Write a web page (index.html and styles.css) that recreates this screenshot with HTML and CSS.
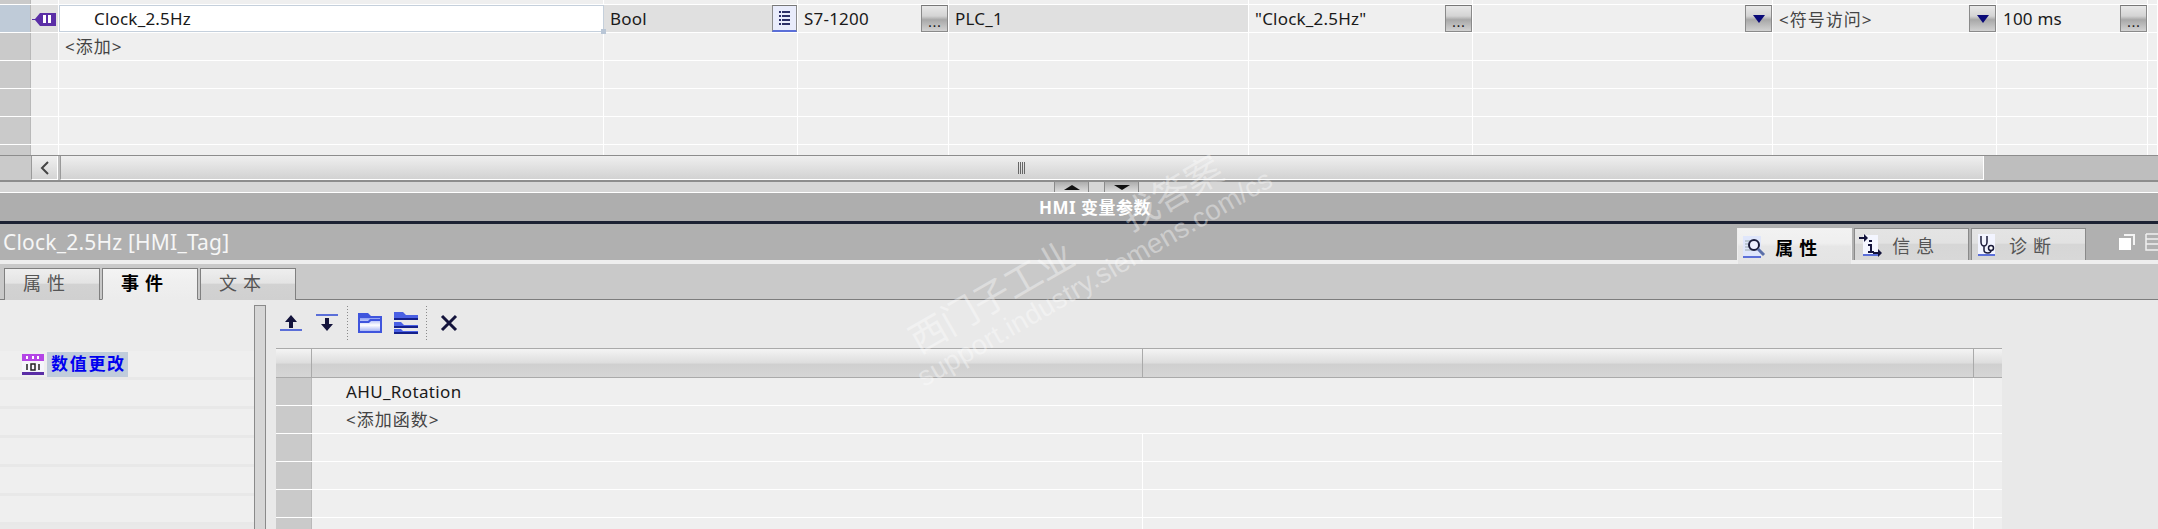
FILE: index.html
```html
<!DOCTYPE html>
<html lang="zh-CN">
<head>
  <meta charset="UTF-8">
  <title>HMI Tag</title>
  <link rel="stylesheet" href="styles.css">
</head>
<body>
  <div class="page">
    <div class="tag-table">
      <div class="tag-row strip">
        <div class="hdr"></div><div class="cell"></div><div class="cell"></div><div class="cell"></div><div class="cell"></div><div class="cell"></div><div class="cell"></div><div class="cell"></div><div class="cell"></div><div class="cell"></div><div class="cell"></div>
      </div>
      <div class="tag-row selected">
        <div class="hdr"></div>
        <div class="cell icon-cell">
          <svg width="24" height="16" viewBox="0 0 24 16"><path d="M0 8h3l5-6h16v13H8L3 9H0z" fill="#5a2ea6"/><rect x="11" y="4" width="3" height="8" fill="#fff"/><rect x="16" y="4" width="3" height="8" fill="#fff"/></svg>
        </div>
        <div class="cell name-cell">Clock_2.5Hz<span class="handle"></span></div>
        <div class="cell dark">Bool
          <button class="btn list-btn"><svg width="15" height="21" viewBox="0 0 15 21"><g fill="#2c2f66"><rect x="2" y="3" width="2" height="2"/><rect x="5" y="3" width="8" height="2"/><rect x="2" y="7" width="2" height="2"/><rect x="5" y="7" width="8" height="2"/><rect x="2" y="11" width="2" height="2"/><rect x="5" y="11" width="8" height="2"/><rect x="2" y="15" width="2" height="2"/><rect x="5" y="15" width="8" height="2"/></g></svg></button>
        </div>
        <div class="cell">S7-1200<button class="btn">...</button></div>
        <div class="cell dark">PLC_1</div>
        <div class="cell">"Clock_2.5Hz"<button class="btn">...</button></div>
        <div class="cell"><button class="btn drop"><span class="tri"></span></button></div>
        <div class="cell cjk">&lt;符号访问&gt;<button class="btn drop"><span class="tri"></span></button></div>
        <div class="cell">100 ms<button class="btn">...</button></div>
        <div class="cell"></div>
      </div>
      <div class="tag-row">
        <div class="hdr"></div><div class="cell shade"></div><div class="cell cjk raised">&lt;添加&gt;</div><div class="cell"></div><div class="cell"></div><div class="cell"></div><div class="cell"></div><div class="cell"></div><div class="cell"></div><div class="cell"></div><div class="cell"></div>
      </div>
      <div class="tag-row">
        <div class="hdr"></div><div class="cell"></div><div class="cell"></div><div class="cell"></div><div class="cell"></div><div class="cell"></div><div class="cell"></div><div class="cell"></div><div class="cell"></div><div class="cell"></div><div class="cell"></div>
      </div>
      <div class="tag-row">
        <div class="hdr"></div><div class="cell"></div><div class="cell"></div><div class="cell"></div><div class="cell"></div><div class="cell"></div><div class="cell"></div><div class="cell"></div><div class="cell"></div><div class="cell"></div><div class="cell"></div>
      </div>
      <div class="tag-row">
        <div class="hdr"></div><div class="cell"></div><div class="cell"></div><div class="cell"></div><div class="cell"></div><div class="cell"></div><div class="cell"></div><div class="cell"></div><div class="cell"></div><div class="cell"></div><div class="cell"></div>
      </div>
      <div class="tag-row tail">
        <div class="hdr"></div><div class="cell"></div><div class="cell"></div><div class="cell"></div><div class="cell"></div><div class="cell"></div><div class="cell"></div><div class="cell"></div><div class="cell"></div><div class="cell"></div><div class="cell"></div>
      </div>
    </div>

    <div class="hscroll">
      <div class="hscroll-corner"></div>
      <div class="hscroll-btn"><svg width="10" height="14" viewBox="0 0 10 14"><path d="M8 1L2 7l6 6" fill="none" stroke="#444" stroke-width="2"/></svg></div>
      <div class="hscroll-thumb"><span class="grip"></span></div>
      <div class="hscroll-rest"></div>
    </div>

    <div class="splitter">
      <div class="split-btn"><span class="tri-up"></span></div>
      <div class="split-btn"><span class="tri-down"></span></div>
    </div>

    <div class="editor-title">HMI 变量参数</div>

    <div class="title-bar">
      <div class="title-text">Clock_2.5Hz [HMI_Tag]</div>
      <div class="insp-tab active">
        <span class="insp-icon"><svg width="24" height="26" viewBox="0 0 24 26"><rect x="1" y="2" width="18" height="21" fill="#dfe6fb"/><rect x="1" y="22" width="18" height="2" fill="#5b6fd8"/><g stroke="#9aa" stroke-width="1"><path d="M3 7h8M3 10h6M3 13h6M3 16h8"/></g><circle cx="12" cy="11" r="5" fill="#eef" stroke="#1b1b3a" stroke-width="2"/><path d="M16 15l6 6" stroke="#5b6fa8" stroke-width="3"/></svg></span>
        <span class="insp-label">属性</span>
      </div>
      <div class="insp-tab">
        <span class="insp-icon"><svg width="24" height="26" viewBox="0 0 24 26"><rect x="4" y="3" width="15" height="20" fill="#f4f6ff"/><rect x="4" y="22" width="15" height="2" fill="#5b6fd8"/><path d="M0 5h5V2l4 4-4 4V7H0z" fill="#14143c"/><path d="M10 8h3v2h-3zM9 12h4v7h2v2H9v-2h2v-5H9z" fill="#14143c"/><path d="M14 20h5v-3l4 4-4 4v-3h-5z" fill="#14143c"/></svg></span>
        <span class="insp-label">信息</span>
      </div>
      <div class="insp-tab">
        <span class="insp-icon steth"><svg width="18" height="26" viewBox="0 0 18 26"><rect x="0" y="2" width="17" height="21" fill="#f2f4ff"/><rect x="0" y="22" width="17" height="2" fill="#5b6fd8"/><path d="M3 4v6c0 3 2 4 3 4s3-1 3-4V4M6 14v4c0 2 2 3 4 3s3-1 3-3" fill="none" stroke="#1a1a3a" stroke-width="1.5"/><circle cx="13" cy="16" r="2.5" fill="#fff" stroke="#1a1a3a" stroke-width="1.5"/></svg></span>
        <span class="insp-label">诊断</span>
      </div>
      <div class="win-icons">
        <svg width="18" height="18" viewBox="0 0 18 18"><path d="M6 1h11v11h-2V3H6z" fill="#f4f4f4"/><rect x="1" y="5" width="12" height="12" fill="#fff"/></svg>
        <svg class="lines-icon" width="13" height="18" viewBox="0 0 13 18"><path d="M1 1h12M1 1v16h12M1 6h12M1 11h12" fill="none" stroke="#f0f0f0" stroke-width="1.5"/></svg>
      </div>
    </div>

    <div class="tab-strip">
      <div class="sub-tab">属性</div>
      <div class="sub-tab active">事件</div>
      <div class="sub-tab">文本</div>
    </div>

    <div class="main">
      <div class="event-list">
        <div class="event-top"></div>
        <div class="event-row">
          <svg class="event-icon" width="22" height="21" viewBox="0 0 22 21"><rect width="22" height="8" fill="#b445e6"/><rect y="7" width="22" height="12" fill="#f5f5fb"/><rect y="18" width="22" height="3" fill="#5a2ea6"/><path d="M5 2v3M11 2v3M16 2v3" stroke="#fff" stroke-width="2"/><path d="M5 10v6M9 10h4v6H9zM17 10v6" fill="none" stroke="#222" stroke-width="1.5"/></svg>
          <span class="event-label">数值更改</span>
        </div>
        <div class="event-row"></div>
        <div class="event-row"></div>
        <div class="event-row"></div>
        <div class="event-row"></div>
        <div class="event-row"></div>
      </div>
      <div class="vscroll"></div>
      <div class="func-pane">
        <div class="toolbar">
          <svg class="tool" width="22" height="18" viewBox="0 0 22 18"><path d="M11 1l6 7h-4v6H9V8H5z" fill="#14143c"/><rect y="15" width="22" height="2" fill="#5b6fd8"/></svg>
          <svg class="tool" width="22" height="18" viewBox="0 0 22 18"><rect width="22" height="2" fill="#5b6fd8"/><path d="M11 17l-6-7h4V4h4v6h4z" fill="#14143c"/></svg>
          <span class="tool-sep"></span>
          <svg class="tool folder" width="24" height="20" viewBox="0 0 24 20">
            <defs><linearGradient id="folderFill" x1="0" y1="0" x2="0" y2="1"><stop offset="0" stop-color="#8fa0f4"/><stop offset="0.55" stop-color="#ffffff"/><stop offset="1" stop-color="#a9b6f6"/></linearGradient></defs>
            <path d="M0 0h10l3 3h11v17H0z" fill="#3f55dd"/><rect x="2" y="5" width="20" height="13" fill="url(#folderFill)"/><path d="M2 8h8l2-2h10v2H13l-2 2H2z" fill="#3f55dd"/>
          </svg>
          <svg class="tool folder" width="24" height="22" viewBox="0 0 24 22"><path d="M0 0h9l3 3h12v3H0z" fill="#4a60e4"/><rect y="6" width="24" height="2" fill="#14208c"/><path d="M0 10h7l3 3h14v1H0z" fill="#4a60e4"/><rect y="14" width="24" height="2" fill="#14208c"/><path d="M0 17h7l2 2h15v1H0z" fill="#4a60e4"/><rect y="20" width="24" height="2" fill="#14208c"/></svg>
          <span class="tool-sep last"></span>
          <svg class="tool tool-x" width="18" height="18" viewBox="0 0 18 18"><path d="M2 2l14 14M16 2L2 16" stroke="#14143c" stroke-width="3"/></svg>
        </div>
        <div class="func-table">
          <div class="func-head"><div class="fh"></div><div class="fh"></div><div class="fh"></div><div class="fh"></div></div>
          <div class="func-row"><div class="hdr"></div><div class="fcell wide">AHU_Rotation</div><div class="fcell"></div></div>
          <div class="func-row"><div class="hdr"></div><div class="fcell wide cjk raised">&lt;添加函数&gt;</div><div class="fcell"></div></div>
          <div class="func-row"><div class="hdr"></div><div class="fcell"></div><div class="fcell"></div><div class="fcell"></div></div>
          <div class="func-row"><div class="hdr"></div><div class="fcell"></div><div class="fcell"></div><div class="fcell"></div></div>
          <div class="func-row"><div class="hdr"></div><div class="fcell"></div><div class="fcell"></div><div class="fcell"></div></div>
          <div class="func-row"><div class="hdr"></div><div class="fcell"></div><div class="fcell"></div><div class="fcell"></div></div>
        </div>
      </div>
    </div>

    <div class="watermark">
      <div class="wm-cn">西门子工业<span class="wm-gap"></span>找答案</div>
      <div class="wm-en">support.industry.siemens.com/cs</div>
    </div>
  </div>
</body>
</html>
```

FILE: styles.css
```css
* {
  box-sizing: border-box;
}

body {
  margin: 0;
  font-family: "Noto Sans", "Noto Sans CJK SC", sans-serif;
  font-size: 17px;
  letter-spacing: 0.2px;
  color: #1a1a1a;
  background-color: #e9e9e9;
  overflow: hidden;
}

.page {
  position: relative;
  width: 2158px;
  height: 529px;
  overflow: hidden;
  display: flex;
  flex-direction: column;
}

.cjk {
  color: #444;
  letter-spacing: 1px;
}

.raised {
  padding-bottom: 2px;
}

/* top table */
.tag-row {
  display: grid;
  grid-template-columns: 31px 28px 545px 194px 151px 300px 224px 300px 224px 151px 10px;
  height: 28px;
  border-bottom: 1px solid #fff;
  background-color: #efefef;
}

.tag-row.strip {
  height: 5px;
}

.tag-row.tail {
  height: 10px;
  border-bottom: none;
}

.hdr {
  background-color: #cacaca;
  border-right: 1px solid #b9b9b9;
}

.cell {
  display: flex;
  align-items: center;
  padding-left: 6px;
  border-right: 1px solid #fff;
  white-space: nowrap;
}

.selected .hdr {
  background-color: #bfcbd8;
}

.selected .cell.dark {
  background-color: #e0e0e0;
}

.cell.shade {
  background-color: #e4e4e4;
}

.cell.icon-cell {
  background-color: #e0e0e0;
  padding-left: 1px;
}

.name-cell {
  position: relative;
  background-color: #fff;
  border: 1px solid #c5d0dc;
  padding-left: 34px;
}

.handle {
  position: absolute;
  right: -3px;
  bottom: -3px;
  width: 5px;
  height: 5px;
  background-color: #b9c6d6;
}

.btn {
  width: 27px;
  height: 27px;
  margin: 0 0 0 auto;
  padding: 0;
  flex: none;
  border: 1px solid #8a8a8a;
  border-top-color: #777;
  background: linear-gradient(#e8e8e8, #d4d4d4 40%, #a8a8a8 55%, #d2d2d2);
  display: flex;
  align-items: flex-end;
  justify-content: center;
  font-family: "Liberation Sans", sans-serif;
  font-size: 16px;
  line-height: 19px;
  color: #222;
}

.list-btn {
  width: 25px;
  background: #e9ecfb;
  border-bottom: 2px solid #5b6fd8;
  align-items: center;
}

.drop {
  align-items: center;
}

.tri {
  width: 0;
  height: 0;
  border-left: 6px solid transparent;
  border-right: 6px solid transparent;
  border-top: 8px solid #0a0a78;
}

/* horizontal scrollbar */
.hscroll {
  display: flex;
  height: 25px;
  border-top: 1px solid #8d8d8d;
  background-color: #bebebe;
}

.hscroll-corner {
  width: 31px;
  background-color: #cacaca;
}

.hscroll-btn {
  width: 27px;
  display: flex;
  align-items: center;
  justify-content: center;
  background: linear-gradient(#f0f0f0, #d4d4d4);
  border-right: 1px solid #fff;
  border-bottom: 1px solid #fff;
  border-left: 1px solid #9a9a9a;
}

.hscroll-thumb {
  width: 1924px;
  margin-left: 2px;
  display: flex;
  align-items: center;
  justify-content: center;
  background: linear-gradient(#efefef, #d2d2d2);
  border-right: 1px solid #fff;
  border-bottom: 1px solid #fff;
  border-left: 1px solid #9a9a9a;
}

.grip {
  width: 8px;
  height: 12px;
  background: repeating-linear-gradient(90deg, #666 0, #666 1px, transparent 1px, transparent 2px);
}

.hscroll-rest {
  flex: 1;
}

/* splitter between editor and inspector */
.splitter {
  display: flex;
  height: 13px;
  padding-left: 1054px;
  gap: 15px;
  background-color: #d6d6d6;
  border-top: 2px solid #8d8d8d;
  border-bottom: 1px solid #fff;
}

.split-btn {
  width: 35px;
  display: flex;
  align-items: center;
  justify-content: center;
  background: linear-gradient(#adadad, #dcdcdc);
  border-left: 1px solid #8a8a8a;
  border-right: 1px solid #8a8a8a;
}

.tri-up,
.tri-down {
  width: 0;
  height: 0;
  border-left: 8px solid transparent;
  border-right: 8px solid transparent;
}

.tri-up {
  border-bottom: 5px solid #111;
}

.tri-down {
  border-top: 5px solid #111;
}

.editor-title {
  height: 31px;
  padding: 0 0 2px 32px;
  display: flex;
  align-items: center;
  justify-content: center;
  background-color: #aeaeae;
  border-bottom: 3px solid #1c2233;
  color: #fff;
  font-weight: bold;
  font-size: 17px;
  letter-spacing: 0.5px;
}

/* inspector title */
.title-bar {
  height: 36px;
  display: flex;
  align-items: flex-end;
  background-color: #b0b0b0;
  position: relative;
}

.title-text {
  width: 1739px;
  height: 36px;
  padding-left: 3px;
  line-height: 37px;
  font-size: 21px;
  color: #f6f6f6;
}

.insp-tab {
  width: 115px;
  height: 32px;
  margin-right: 2px;
  padding-left: 4px;
  display: flex;
  align-items: center;
  border: 1px solid #8a8a8a;
  border-bottom: none;
  background: linear-gradient(#e4e4e4, #e2e2e2 45%, #d6d6d6 50%, #d8d8d8);
}

.insp-tab.active {
  height: 36px;
  margin-bottom: -4px;
  border-color: #efefef;
  background: linear-gradient(#f2f2f2, #efefef 40%, #e6e6e6 50%, #e4e4e4);
  position: relative;
}

.insp-icon {
  width: 33px;
  flex: none;
  display: flex;
}

.insp-icon.steth {
  padding-left: 2px;
}

.insp-label {
  font-size: 18px;
  letter-spacing: 6px;
  color: #555;
}

.active .insp-label {
  color: #000;
  font-weight: bold;
}

.win-icons {
  flex: 1;
  height: 32px;
  padding: 5px 0 0 30px;
  display: flex;
  gap: 9px;
}

.lines-icon {
  flex: none;
}

/* sub tabs */
.tab-strip {
  height: 40px;
  padding: 4px 0 0 4px;
  display: flex;
  gap: 2px;
  background-color: #c9c9c9;
  border-top: 4px solid #eee;
  border-bottom: 1px solid #7d7d7d;
}

.sub-tab {
  width: 96px;
  height: 32px;
  padding-left: 18px;
  line-height: 29px;
  font-size: 18px;
  letter-spacing: 6px;
  color: #555;
  border: 1px solid #808080;
  border-bottom: none;
  background: linear-gradient(#eeeeee, #e4e4e4 45%, #d2d2d2 50%, #d0d0d0);
}

.sub-tab.active {
  color: #000;
  font-weight: bold;
  border-bottom: 1px solid #ececec;
  background: linear-gradient(#f4f4f4, #efefef 45%, #ececec);
}

/* lower pane */
.main {
  flex: 1;
  display: flex;
  min-height: 0;
}

.event-list {
  width: 254px;
  flex: none;
}

.event-top {
  height: 51px;
  background-color: #ececec;
}

.event-row {
  height: 29px;
  display: flex;
  align-items: flex-start;
  background-color: #efefef;
  border-bottom: 3px solid #e8e8e8;
}

.event-icon {
  margin: 3px 0 0 22px;
}

.event-label {
  margin: 1px 0 0 3px;
  height: 25px;
  padding: 0 2px 0 4px;
  line-height: 24px;
  background-color: #c0ccdb;
  color: #0000f0;
  font-size: 17px;
  font-weight: bold;
  letter-spacing: 1.7px;
}

.vscroll {
  width: 12px;
  flex: none;
  margin-top: 5px;
  background-color: #d6d6d6;
  border: 1px solid #8a8a8a;
  border-bottom: none;
}

.func-pane {
  flex: 1;
  min-width: 0;
  padding-left: 10px;
}

.toolbar {
  height: 48px;
  padding: 6px 0 8px 4px;
  display: flex;
  align-items: center;
}

.tool {
  flex: none;
  margin-right: 14px;
}

.tool.folder {
  margin-right: 12px;
}

.tool.tool-x {
  margin-left: 3px;
}

.tool-sep {
  width: 1px;
  height: 34px;
  margin: 0 10px 0 -5px;
  background: repeating-linear-gradient(#8a8a8a 0, #8a8a8a 1px, transparent 1px, transparent 3px);
}

.tool-sep.last {
  margin-left: -4px;
}

.func-table {
  width: 1726px;
}

.func-head {
  display: grid;
  grid-template-columns: 36px 831px 831px 28px;
  height: 30px;
  border-top: 1px solid #aaa;
  border-bottom: 1px solid #aaa;
}

.fh {
  background: linear-gradient(#f4f4f4, #dddddd 50%, #cfcfcf 54%, #d6d6d6);
  border-right: 1px solid #aaa;
}

.fh:last-child {
  border-right: none;
}

.func-row {
  display: grid;
  grid-template-columns: 36px 831px 831px 28px;
  height: 28px;
  background-color: #efefef;
  border-bottom: 1px solid #fff;
}

.fcell {
  display: flex;
  align-items: center;
  padding-left: 34px;
  border-right: 1px solid #fff;
}

.fcell.wide {
  grid-column: span 2;
  letter-spacing: 0.35px;
}

.fcell.wide.cjk {
  letter-spacing: 1px;
}

.fcell:last-child {
  border-right: none;
}

/* watermark lies over the whole page */
.watermark {
  position: absolute;
  left: 902px;
  top: 325px;
  transform: rotate(-30deg);
  transform-origin: 0 0;
  color: rgba(255, 255, 255, 0.38);
  white-space: nowrap;
  pointer-events: none;
}

.wm-cn {
  font-size: 37px;
  line-height: 40px;
  letter-spacing: -0.5px;
}

.wm-gap {
  display: inline-block;
  width: 62px;
}

.wm-en {
  margin-left: -12px;
  font-family: "Liberation Sans", sans-serif;
  font-size: 27.5px;
  line-height: 32px;
}
```
